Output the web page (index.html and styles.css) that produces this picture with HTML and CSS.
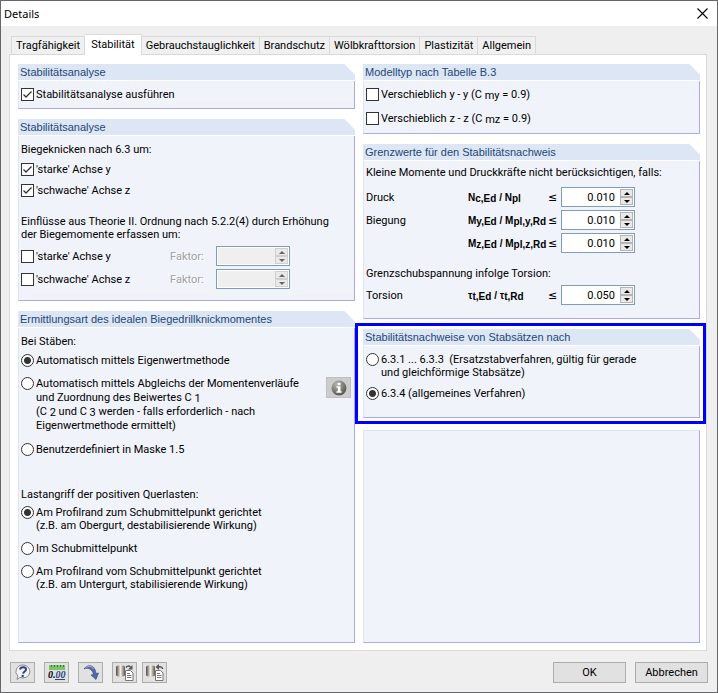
FILE: index.html
```
<!DOCTYPE html>
<html lang="de">
<head>
    <meta charset="UTF-8">
    <meta name="viewport" content="width=device-width, initial-scale=1.0">
    <title>Details</title>
    <link rel="stylesheet" href="styles.css">
</head>
<body>
    <div class="dialog">
        <header class="titlebar">
            <h1>Details</h1>
            <button class="close" aria-label="Schließen">
                <svg width="11" height="11" viewBox="0 0 11 11"><path d="M.5 .5l10 10M10.5 .5l-10 10" stroke="#000" stroke-width="1.1"/></svg>
            </button>
        </header>

        <nav class="tabs">
            <button>Tragfähigkeit</button>
            <button class="active">Stabilität</button>
            <button>Gebrauchstauglichkeit</button>
            <button>Brandschutz</button>
            <button>Wölbkrafttorsion</button>
            <button>Plastizität</button>
            <button>Allgemein</button>
        </nav>

        <main class="page">
            <div class="column">
                <section class="group">
                    <h2>Stabilitätsanalyse</h2>
                    <div class="group-body">
                        <label class="option"><input type="checkbox" checked><span>Stabilitätsanalyse ausführen</span></label>
                    </div>
                </section>

                <section class="group">
                    <h2>Stabilitätsanalyse</h2>
                    <div class="group-body">
                        <p>Biegeknicken nach 6.3 um:</p>
                        <div class="options">
                            <label class="option"><input type="checkbox" checked><span>'starke' Achse y</span></label>
                            <label class="option"><input type="checkbox" checked><span>'schwache' Achse z</span></label>
                        </div>
                        <p class="spaced">Einflüsse aus Theorie II. Ordnung nach 5.2.2(4) durch Erhöhung<br>der Biegemomente erfassen um:</p>
                        <div class="factors">
                            <label class="option"><input type="checkbox"><span>'starke' Achse y</span></label>
                            <label class="dim" for="factorY">Faktor:</label>
                            <div class="spin disabled"><input type="text" id="factorY" disabled><button disabled aria-label="Mehr"></button><button disabled aria-label="Weniger"></button></div>
                            <label class="option"><input type="checkbox"><span>'schwache' Achse z</span></label>
                            <label class="dim" for="factorZ">Faktor:</label>
                            <div class="spin disabled"><input type="text" id="factorZ" disabled><button disabled aria-label="Mehr"></button><button disabled aria-label="Weniger"></button></div>
                        </div>
                    </div>
                </section>

                <section class="group fill">
                    <h2>Ermittlungsart des idealen Biegedrillknickmomentes</h2>
                    <div class="group-body">
                        <p>Bei Stäben:</p>
                        <div class="methods">
                            <label class="option"><input type="radio" name="method" checked><span>Automatisch mittels Eigenwertmethode</span></label>
                            <div class="with-info">
                                <label class="option loose"><input type="radio" name="method"><span>Automatisch mittels Abgleichs der Momentenverläufe<br>und Zuordnung des Beiwertes C <sub>1</sub><br>(C <sub>2</sub> und C <sub>3</sub> werden - falls erforderlich - nach<br>Eigenwertmethode ermittelt)</span></label>
                                <button class="icon-button info" aria-label="Info">
                                    <svg width="16" height="16" viewBox="0 0 16 16">
                                        <defs><radialGradient id="ball" cx=".35" cy=".25" r=".8"><stop offset="0" stop-color="#b4b4b0"/><stop offset="1" stop-color="#55554f"/></radialGradient></defs>
                                        <circle cx="8" cy="8" r="7.5" fill="url(#ball)"/>
                                        <path d="M6.7 2.8h2.8v2.4H6.7zM5.5 6.3h4v5h1.2v1.5H5.4v-1.5h1.4V7.8H5.5z" fill="#fff"/>
                                    </svg>
                                </button>
                            </div>
                            <label class="option"><input type="radio" name="method"><span>Benutzerdefiniert in Maske 1.5</span></label>
                        </div>
                        <p class="loads-title">Lastangriff der positiven Querlasten:</p>
                        <div class="loads">
                            <label class="option"><input type="radio" name="load" checked><span>Am Profilrand zum Schubmittelpunkt gerichtet<br>(z.B. am Obergurt, destabilisierende Wirkung)</span></label>
                            <label class="option"><input type="radio" name="load"><span>Im Schubmittelpunkt</span></label>
                            <label class="option"><input type="radio" name="load"><span>Am Profilrand vom Schubmittelpunkt gerichtet<br>(z.B. am Untergurt, stabilisierende Wirkung)</span></label>
                        </div>
                    </div>
                </section>
            </div>

            <div class="column">
                <section class="group">
                    <h2>Modelltyp nach Tabelle B.3</h2>
                    <div class="group-body model">
                        <label class="option"><input type="checkbox"><span>Verschieblich y - y (C <sub>my</sub> = 0.9)</span></label>
                        <label class="option"><input type="checkbox"><span>Verschieblich z - z (C <sub>mz</sub> = 0.9)</span></label>
                    </div>
                </section>

                <section class="group">
                    <h2>Grenzwerte für den Stabilitätsnachweis</h2>
                    <div class="group-body limits-body">
                        <p>Kleine Momente und Druckkräfte nicht berücksichtigen, falls:</p>
                        <div class="limits">
                            <span>Druck</span>
                            <label class="formula" for="limN">N<sub>c,Ed</sub> / N<sub>pl</sub></label>
                            <span class="relation">≤</span>
                            <div class="spin"><input type="text" id="limN" value="0.010"><button aria-label="Mehr"></button><button aria-label="Weniger"></button></div>
                            <span>Biegung</span>
                            <label class="formula" for="limMy">M<sub>y,Ed</sub> / M<sub>pl,y,Rd</sub></label>
                            <span class="relation">≤</span>
                            <div class="spin"><input type="text" id="limMy" value="0.010"><button aria-label="Mehr"></button><button aria-label="Weniger"></button></div>
                            <span></span>
                            <label class="formula" for="limMz">M<sub>z,Ed</sub> / M<sub>pl,z,Rd</sub></label>
                            <span class="relation">≤</span>
                            <div class="spin"><input type="text" id="limMz" value="0.010"><button aria-label="Mehr"></button><button aria-label="Weniger"></button></div>
                        </div>
                        <p class="torsion-title">Grenzschubspannung infolge Torsion:</p>
                        <div class="limits torsion">
                            <span>Torsion</span>
                            <label class="formula" for="limT">τ<sub>t,Ed</sub> / τ<sub>t,Rd</sub></label>
                            <span class="relation">≤</span>
                            <div class="spin"><input type="text" id="limT" value="0.050"><button aria-label="Mehr"></button><button aria-label="Weniger"></button></div>
                        </div>
                    </div>
                </section>

                <section class="group marked">
                    <h2>Stabilitätsnachweise von Stabsätzen nach</h2>
                    <div class="group-body sets">
                        <label class="option"><input type="radio" name="sets"><span>6.3.1 ... 6.3.3&nbsp; (Ersatzstabverfahren, gültig für gerade<br>und gleichförmige Stabsätze)</span></label>
                        <label class="option"><input type="radio" name="sets" checked><span>6.3.4 (allgemeines Verfahren)</span></label>
                    </div>
                </section>

                <section class="group fill empty"></section>
            </div>
        </main>

        <footer class="footer">
            <button class="icon-button" aria-label="Hilfe">
                <svg width="18" height="17" viewBox="0 0 18 17">
                    <path d="M9 1a7 6.500 0 1 1-3 12.400L3 15.500l.8-3.500A7 6.500 0 0 1 9 1z" fill="#f2f3f5" stroke="#8b8e92"/>
                    <path d="M6 5.500c.5-3 6-3 6 0 0 2-2.700 2-2.900 4.200" fill="none" stroke="#2b4480" stroke-width="2"/>
                    <circle cx="8.700" cy="12" r="1.200" fill="#2b4480"/>
                </svg>
            </button>
            <button class="icon-button" aria-label="Dezimalstellen">
                <svg width="18" height="17" viewBox="0 0 18 17">
                    <path d="M1 1h16v5H1z" fill="#7cc46c"/>
                    <path d="M3.500 1v2M6.500 1v2M9.500 1v2M12.500 1v2M15.500 1v2" stroke="#3c7d36"/>
                    <path d="M7 15.500h10" stroke="#2b4480"/>
                    <text x="0" y="14" class="digits">0.<tspan fill="#2b4480">00</tspan></text>
                </svg>
            </button>
            <button class="icon-button" aria-label="Standard">
                <svg width="18" height="17" viewBox="0 0 18 17">
                    <path d="M2 5C5 0 13 0 14 9.500l2.500-.5-2.500 6.500-5-4.500 2.500-.5C10.500 5.500 6.500 3 2 5z" fill="#526aa8" stroke="#2d4170" stroke-width=".6"/>
                    <path d="M3.500 4C6 1.500 10 2 11.500 5" fill="none" stroke="#a9b8de"/>
                </svg>
            </button>
            <div class="file-buttons">
                <button class="icon-button" aria-label="Laden">
                    <svg width="18" height="17" viewBox="0 0 18 17">
                        <defs><linearGradient id="can"><stop offset="0" stop-color="#4f4842"/><stop offset=".5" stop-color="#f4efe8"/><stop offset="1" stop-color="#5f5750"/></linearGradient></defs>
                        <path d="M0 3c0-2.500 9-2.500 9 0v8c0 2-9 2-9 0z" fill="url(#can)"/>
                        <path d="M9.500 6.500h5l2.500 2.500v7.500H9.500z" fill="#fff" stroke="#777"/>
                        <path d="M11 9.500h3M11 11.500h4.500M11 13.500h4.500" stroke="#777"/>
                        <path d="M10 3.500c1-1.500 3-2 4.500-.5" fill="none" stroke="#555" stroke-width="1.500"/><path d="M16.500 1v4.500H12z" fill="#555"/>
                    </svg>
                </button>
                <button class="icon-button" aria-label="Speichern">
                    <svg width="18" height="17" viewBox="0 0 18 17">
                        <path d="M0 3c0-2.500 9-2.500 9 0v8c0 2-9 2-9 0z" fill="url(#can)"/>
                        <path d="M9.500 6.500h5l2.500 2.500v7.500H9.500z" fill="#fff" stroke="#777"/>
                        <path d="M11 9.500h3M11 11.500h4.500M11 13.500h4.500" stroke="#777"/>
                        <path d="M16.500 5c0-2-1.500-2.500-4-2" fill="none" stroke="#555" stroke-width="1.500"/><path d="M13 0v6L9.500 3z" fill="#555"/>
                    </svg>
                </button>
            </div>
            <button class="push ok">OK</button>
            <button class="push">Abbrechen</button>
        </footer>
    </div>
</body>
</html>
```

FILE: styles.css
```
* {
    box-sizing: border-box;
}
body {
    margin: 0;
    font-family: Roboto, Tahoma, sans-serif;
    font-size: 11px;
    line-height: 13px;
    color: #000;
}
h1, h2, p {
    margin: 0;
    font-size: inherit;
    font-weight: normal;
}
button, input {
    font: inherit;
    color: inherit;
    margin: 0;
    padding: 0;
    border-radius: 0;
}
svg {
    display: block;
}
sub {
    font-size: inherit;
    line-height: 0;
    vertical-align: -1px;
}
.dialog {
    display: flex;
    flex-direction: column;
    min-height: 100vh;
    border: 1px solid #67676b;
    background: #efefef;
}
.titlebar {
    display: flex;
    justify-content: space-between;
    align-items: center;
    height: 25px;
    padding: 0 9px 0 3px;
    background: #fff;
}
.titlebar h1 {
    font-family: "Noto Sans", sans-serif;
}
.close {
    border: none;
    background: none;
}

/* Tabs */
.tabs {
    display: flex;
    align-items: flex-end;
    margin: 8px 0 -1px 10px;
    z-index: 1;
}
.tabs button {
    height: 19px;
    padding: 0 4px;
    border: 1px solid #d9d9d9;
    border-left: none;
    background: #f0f0f0;
}
.tabs button:first-child {
    border-left: 1px solid #d9d9d9;
}
.tabs .active {
    height: 21px;
    padding: 0 6px 2px;
    border-bottom: none;
    background: #fff;
}
.page {
    flex: 1;
    display: grid;
    grid-template-columns: 1fr 1fr;
    gap: 8px;
    margin: 0 10px 0 8px;
    padding: 9px 6px 7px 8px;
    border: 1px solid #d9d9d9;
    background: #fff;
}
.column {
    display: flex;
    flex-direction: column;
    gap: 10px;
}

/* Group boxes */
.group {
    position: relative;
    border: 1px solid #a9a9ec;
    border-left-color: #dce6f4;
    border-top: none;
    background: #f0f3f9;
}
.group h2 {
    height: 17px;
    margin: 0 -1px;
    padding-left: 2px;
    border-bottom: 1px solid #fff;
    font-family: "Liberation Sans", Arial, sans-serif;
    line-height: 16px;
    color: #1f4778;
    background: linear-gradient(225deg, #fff 7px, #dce6f4 8px);
}
.group-body {
    padding: 7px 2px;
}
.fill {
    flex: 1;
}
.empty {
    border-top: 1px solid #dce6f4;
}
.marked {
    margin-bottom: 2px;
}
.marked::after {
    content: "";
    position: absolute;
    inset: -6px -7px -7px -9px;
    border: 3px solid #0000ff;
    pointer-events: none;
}

/* Options */
.option {
    display: flex;
    align-items: flex-start;
    gap: 2px;
}
.option input {
    appearance: none;
    flex: none;
    width: 13px;
    height: 13px;
    border: 1px solid #333;
    background: #fff;
}
.option input[type="checkbox"]:checked {
    background: url('data:image/svg+xml,<svg xmlns="http://www.w3.org/2000/svg" viewBox="0 0 11 11"><path d="M1.500 5.500l2.500 2.500 5.500-5.500" fill="none" stroke="%23333" stroke-width="1.300"/></svg>') #fff;
}
.option input[type="radio"] {
    border-radius: 50%;
}
.option input[type="radio"]:checked {
    background: radial-gradient(circle, #333 3px, #fff 4px);
}
.loose {
    line-height: 14px;
}
.options, .methods, .loads, .model, .sets {
    display: grid;
}
.options {
    gap: 8px;
    margin-top: 7px;
}
.spaced {
    margin-top: 18px;
}
.factors {
    display: grid;
    grid-template-columns: 149px 46px 74px;
    align-items: center;
    row-gap: 3px;
    margin: 5px 0 4px;
}
.dim {
    color: #a0a0a0;
    text-shadow: 1px 1px #fff;
}
.methods {
    gap: 10px;
    margin-top: 6px;
}
.with-info {
    display: flex;
    justify-content: space-between;
    align-items: flex-start;
    padding-right: 1px;
}
.loads-title {
    margin-top: 32px;
}
.loads {
    gap: 10px;
    margin-top: 5px;
}
.model {
    gap: 11px;
    padding-bottom: 8px;
}
.sets {
    gap: 8px;
    padding-bottom: 17px;
}

/* Limit values */
.limits-body {
    padding-top: 5px;
    padding-bottom: 13px;
}
.limits {
    display: grid;
    grid-template-columns: 102px 80px 13px 74px;
    align-items: center;
    row-gap: 3px;
    margin-top: 8px;
}
.torsion {
    margin-top: 5px;
}
.formula {
    font-family: "Liberation Sans", Arial, sans-serif;
    font-size: 10px;
    font-weight: bold;
    white-space: nowrap;
}
.relation {
    font-family: "DejaVu Sans", sans-serif;
}
.torsion-title {
    margin-top: 14px;
}

/* Spin boxes */
.spin {
    display: grid;
    grid-template-columns: 1fr 13px;
    grid-template-rows: 8px 8px;
    height: 20px;
    padding: 1px;
    border: 1px solid #7f9db9;
    background: #fff;
}
.spin input {
    grid-row: 1 / 3;
    min-width: 0;
    padding-right: 5px;
    border: none;
    background: none;
    text-align: right;
}
.spin button {
    display: grid;
    place-items: center;
    border: 1px solid #b4b4b4;
    background: #e9e9e9;
}
.spin button::before {
    content: "";
    border: 3px solid transparent;
    border-top-width: 0;
    border-bottom-color: #000;
}
.spin button:last-child::before {
    border-width: 3px 3px 0;
    border-top-color: #000;
}
.disabled input {
    background: #efefef;
}
.disabled button {
    border-color: #d0d0d0;
}
.disabled button::before {
    border-bottom-color: #666;
}
.disabled button:last-child::before {
    border-top-color: #666;
}

/* Buttons */
.icon-button {
    display: grid;
    place-items: center;
    flex: none;
    width: 25px;
    height: 21px;
    border: 1px solid #adadad;
    background: #e1e1e1;
}
.info {
    background: #cccccc;
    border-color: #bfbfbf;
}
.digits {
    font: italic bold 10px "Liberation Serif", serif;
}
.footer {
    display: flex;
    gap: 9px;
    padding: 11px 9px 9px;
}
.file-buttons {
    display: flex;
    gap: 5px;
}
.push {
    width: 73px;
    height: 21px;
    border: 1px solid #adadad;
    background: #e1e1e1;
}
.ok {
    margin-left: auto;
}
```
